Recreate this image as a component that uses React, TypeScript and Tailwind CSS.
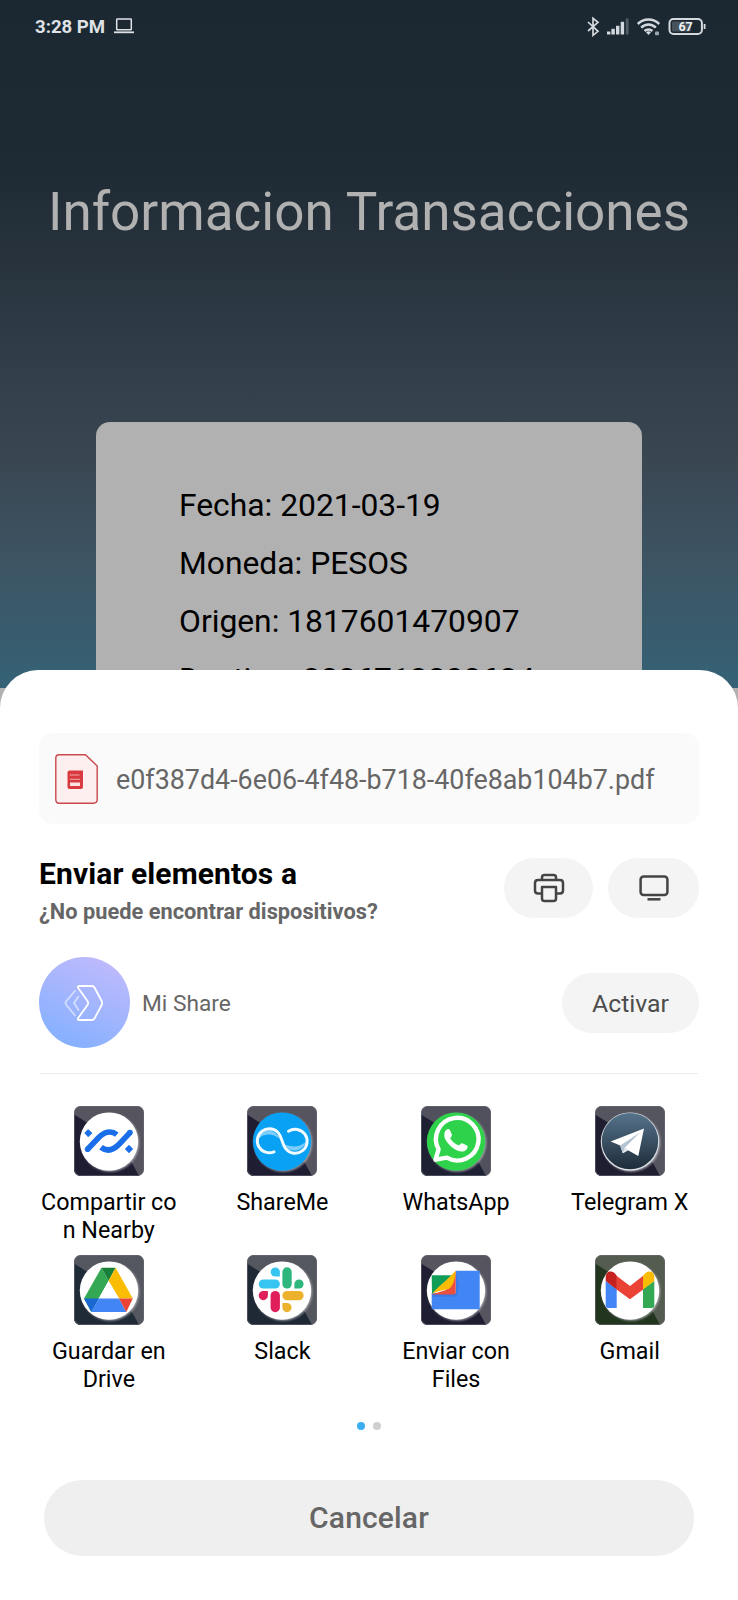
import type { ReactNode } from "react";

function StatusBar() {
  return (
    <header className="flex h-[53px] items-center justify-between pl-[35px] pr-8">
      <div className="flex items-center text-[#dfe3e7]">
        <span className="w-[79px] whitespace-nowrap text-[18.6px] font-bold leading-6">3:28 PM</span>
        <svg width="20" height="16" viewBox="0 0 20 16" fill="none" stroke="currentColor" strokeWidth="1.5" className="-mt-px">
          <rect x="2.7" y="1" width="14.6" height="10.8" rx="0.6" />
          <path d="M0 14.3H20" strokeWidth="1.8" />
        </svg>
      </div>
      <svg width="120" height="22" viewBox="0 0 120 22" fill="none" stroke="#d3d9dd" className="-mt-px text-[#d3d9dd]">
        <path d="M2 7L12 16.3L7 20.3V3.3L12 7.3L2 16" strokeWidth="1.7" />
        <g fill="currentColor" stroke="none">
          <rect x="21" y="16.5" width="3.4" height="3" />
          <rect x="25.4" y="13.8" width="3.4" height="5.7" />
          <rect x="30" y="10.8" width="3.4" height="8.7" />
          <rect x="34.7" y="6.8" width="3.4" height="12.7" />
          <rect x="39.8" y="3.5" width="2.8" height="16" opacity="0.3" />
        </g>
        <g strokeWidth="2.5">
          <path d="M51.8 9A15 15 0 0 1 73.2 9" />
          <path d="M55.2 12.6A10 10 0 0 1 69.8 12.6" />
          <path d="M58.6 16A5.5 5.5 0 0 1 66.4 16" />
        </g>
        <path d="M60 17.2A4 4 0 0 1 65 17.2L62.5 20Z" fill="currentColor" stroke="none" />
        <rect x="69" y="16.5" width="4" height="3.8" rx="1" fill="#9da5ab" stroke="none" />
        <rect x="83.5" y="4" width="32.4" height="15" rx="4" strokeWidth="2" />
        <rect x="86" y="6.4" width="19" height="10.2" rx="1.5" fill="#48525a" stroke="none" />
        <path d="M118.6 9V14" strokeWidth="1.8" />
        <text x="99.6" y="16" textAnchor="middle" fontSize="12.5" fontWeight="700" fill="#eef1f3" stroke="none">67</text>
      </svg>
    </header>
  );
}

type TileProps = { id: string; light: string; dark: string; disc: string; children: ReactNode };

function Tile({ id, light, dark, disc, children }: TileProps) {
  return (
    <svg width="70" height="70" viewBox="0 0 70 70" className="block shrink-0">
      <defs>
        <clipPath id={`clip-${id}`}>
          <rect width="70" height="70" rx="6.500" />
        </clipPath>
        <filter id={`glow-${id}`} x="-20%" y="-20%" width="140%" height="140%">
          <feGaussianBlur stdDeviation="1.200" />
        </filter>
      </defs>
      <g clipPath={`url(#clip-${id})`}>
        <rect width="70" height="70" fill={light} />
        <path d="M0 8.500L12 16L58 57L65 70H0Z" fill={dark} />
        <rect x="0.500" y="0.500" width="69" height="69" rx="6" fill="none" stroke="#6b6b75" strokeOpacity="0.600" />
      </g>
      <circle cx="36.200" cy="36.700" r="29" fill="#c9c9cf" opacity="0.700" filter={`url(#glow-${id})`} />
      <circle cx="35" cy="35.600" r="29.200" fill={disc} />
      {children}
    </svg>
  );
}

const Nearby = () => (
  <Tile id="nearby" light="#55545f" dark="#1f1d32" disc="#ffffff">
    <g fill="none" stroke="#1a6fe8" strokeWidth="5.600">
      <path d="M13.600 43.200L24.500 31.800C30 26 37 24 42.800 28.600" />
      <path d="M56 26.600L45.300 38C39.500 44 33 46 27 41.200" />
    </g>
    <g fill="#1a6fe8">
      <circle cx="13.600" cy="43.200" r="2.800" />
      <circle cx="56" cy="26.600" r="2.800" />
      <path d="M14.200 24L17.600 27.100L14.200 30.400L11.200 27Z" stroke="#1a6fe8" strokeWidth="1.200" strokeLinejoin="round" />
      <path d="M55 39.600L58.300 43L55 46.300L51.700 43Z" stroke="#1a6fe8" strokeWidth="1.200" strokeLinejoin="round" />
    </g>
  </Tile>
);

const ShareMe = () => (
  <Tile id="shareme" light="#55545f" dark="#1f1d32" disc="#08a1f4">
    <path d="M11 33C13 23 26 20 33 33C27 28 18 26 11 33Z" fill="#7dcdfb" />
    <path d="M58.500 36C56 46 43 48 37 38C43 41 52 42 58.500 36Z" fill="#7dcdfb" />
    <path
      d="M27 45.800A12 12 0 1 1 30.500 26C35 30 35 38.500 39 43A12 12 0 1 0 41.500 25.200"
      fill="none"
      stroke="#f2fbff"
      strokeWidth="3"
      strokeLinecap="round"
    />
  </Tile>
);

const WhatsApp = () => (
  <Tile id="whatsapp" light="#50515d" dark="#1e2033" disc="#2fd34b">
    <path
      d="M15.200 54L18.300 43.700A21.300 21.300 0 1 1 26.500 52Z"
      transform="translate(-.7 -.3)"
      fill="none"
      stroke="#fff"
      strokeWidth="4.400"
      strokeLinejoin="round"
    />
    <path
      d="M25.400 23.800C27 22.600 28.400 22.900 29.100 24.600L30.900 28.600C31.200 29.500 30.200 31 29.200 32.200C31.500 36 34 38 38 39.500C39.200 38.200 40.200 37 41.200 37.300L46 39.600C47.300 40.300 46.500 42.500 45 44C41.500 46.900 36.500 45.300 32 42C27.500 38.500 24 34 23.400 30.500C23 27.500 23.800 25 25.400 23.800Z"
      fill="#fff"
    />
  </Tile>
);

const Telegram = () => (
  <Tile id="telegram" light="#55555f" dark="#1f1d30" disc="#dfe3e8">
    <defs>
      <linearGradient id="tg-sky" x1="0" y1="0" x2="0" y2="1">
        <stop offset="0" stopColor="#56748c" />
        <stop offset="1" stopColor="#1e2c3a" />
      </linearGradient>
    </defs>
    <circle cx="35" cy="35.100" r="28.200" fill="url(#tg-sky)" />
    <path d="M15.700 35.600L49 22.400L43.300 50L33 44.300L27.800 47.300L25.200 39.600Z" fill="#fff" />
    <path d="M25.200 39.600L45 26.500L30 41.500L27.800 47.300Z" fill="#b6c3d3" />
    <path d="M30 41.500L33 44.300L27.800 47.300Z" fill="#dce3ec" />
  </Tile>
);

const Drive = () => (
  <Tile id="drive" light="#54575f" dark="#202b38" disc="#ffffff">
    <path d="M27.500 12.700L34.600 25.800L17.300 57L10 43.600Z" fill="#34a853" />
    <path d="M27.500 12.700H41.600L34.600 25.800Z" fill="#188038" />
    <path d="M41.600 12.700L58.800 43.600H45L34.600 25.800Z" fill="#fbbc04" />
    <path d="M34.600 26L45 43.600H24.700Z" fill="#fff" />
    <path d="M10 43.600H24.700L17.300 57Z" fill="#1967d2" />
    <path d="M24.700 43.600H45L52.300 57H17.300Z" fill="#4285f4" />
    <path d="M45 43.600H58.800L52.300 57Z" fill="#ea4335" />
  </Tile>
);

const Slack = () => (
  <Tile id="slack" light="#55575f" dark="#1f2935" disc="#ffffff">
    <g fill="#36c5f0">
      <rect x="11.700" y="24.400" width="21.200" height="9.200" rx="4.600" />
      <path d="M32.900 21.600H28.300A4.600 4.600 0 1 1 32.900 17Z" />
    </g>
    <g fill="#2eb67d">
      <rect x="35.400" y="12.300" width="9.300" height="21.300" rx="4.600" />
      <path d="M47.400 33.600V29A4.600 4.600 0 1 1 52 33.600Z" />
    </g>
    <g fill="#e01e5a">
      <rect x="23.600" y="36" width="9.300" height="21.200" rx="4.600" />
      <path d="M20.900 36V40.600A4.600 4.600 0 1 1 16.300 36Z" />
    </g>
    <g fill="#ecb22e">
      <rect x="35.400" y="36" width="21.200" height="9.300" rx="4.600" />
      <path d="M35.400 48H40A4.600 4.600 0 1 1 35.400 52.600Z" />
    </g>
  </Tile>
);

const Files = () => (
  <Tile id="files" light="#55545f" dark="#1f1d32" disc="#ffffff">
    <path d="M34.700 15.700H58.700V54.300H10.700V38H34.700Z" fill="#4285f4" />
    <path d="M34.700 17L38 30L36 41.500L12 42L10.700 39H34.700Z" fill="#2a5fc4" opacity="0.300" />
    <path d="M10.700 20.300H31L11 39Z" fill="#109d58" />
    <path d="M34.700 15.700V37.500Q34.700 39.500 32.700 39.500H10.700L25 35Z" fill="#ea4f3d" />
    <path d="M34.700 15.700C34 24 32 33 26 34.500C20 35.300 14 37 10.700 39.300C17 32 27 24 34.700 15.700Z" fill="#fbbc04" />
  </Tile>
);

const Gmail = () => (
  <Tile id="gmail" light="#545c50" dark="#22351f" disc="#ffffff">
    <path d="M10.700 26L21.700 34V53H13Q10.700 53 10.700 50.700Z" fill="#4285f4" />
    <path d="M48 34L59.300 26V50.700Q59.300 53 57 53H48Z" fill="#34a853" />
    <path d="M21.200 20.500L35 31L48.500 20.500V34.200L35 44.300L21.200 34.200Z" fill="#ea4335" />
    <path d="M10.700 26V22C10.700 16.500 16 15 20 18.500L21.700 20.800V34.400Z" fill="#c5221f" />
    <path d="M59.300 26V22C59.300 16.500 54 15 50 18.500L48 20.800V34.400Z" fill="#fbbc04" />
  </Tile>
);

const apps: { name: string; lines: string[]; icon: ReactNode }[] = [
  { name: "nearby", lines: ["Compartir co", "n Nearby"], icon: <Nearby /> },
  { name: "shareme", lines: ["ShareMe"], icon: <ShareMe /> },
  { name: "whatsapp", lines: ["WhatsApp"], icon: <WhatsApp /> },
  { name: "telegram", lines: ["Telegram X"], icon: <Telegram /> },
  { name: "drive", lines: ["Guardar en", "Drive"], icon: <Drive /> },
  { name: "slack", lines: ["Slack"], icon: <Slack /> },
  { name: "files", lines: ["Enviar con", "Files"], icon: <Files /> },
  { name: "gmail", lines: ["Gmail"], icon: <Gmail /> },
];

function ShareSheet() {
  return (
    <section className="relative -mt-[18px] flex h-[930px] flex-col rounded-t-[38px] bg-white pt-[63px]">
      <div className="mx-[39px] flex h-[91px] items-center rounded-[14px] bg-[#fafafa] pl-4">
        <svg width="43" height="50" viewBox="0 0 43 50" className="shrink-0">
          <path
            d="M4 .8H30.500L42.200 12V45.500Q42.200 49.200 38.500 49.200H4Q.8 49.200 .8 45.500V4Q.8 .8 4 .8Z"
            fill="#fdeff0"
            stroke="#c9484c"
            strokeWidth="1.400"
          />
          <path d="M14.500 16.500H28V33Q28 35 26 35H14.500Q12.500 35 12.500 33V18.500Q12.500 16.500 14.500 16.500Z" fill="#d83a40" />
          <path d="M14.800 21H24.500M14.800 25.300H25" stroke="#f3a9ab" strokeWidth="1" />
          <rect x="15" y="28.500" width="10" height="3.500" fill="#fbe3e4" />
        </svg>
        <span className="ml-[18px] mt-[3px] whitespace-nowrap text-[26.850px] leading-8 text-[#666]">
          e0f387d4-6e06-4f48-b718-40fe8ab104b7.pdf
        </span>
      </div>

      <div className="mx-[39px] mt-[34px] flex h-[60px] justify-between">
        <div className="whitespace-nowrap">
          <h2 className="text-[30px] font-bold leading-8 tracking-[0.1px] text-black">Enviar elementos a</h2>
          <p className="mt-[10px] text-[21.800px] font-bold leading-6 text-[#666]">¿No puede encontrar dispositivos?</p>
        </div>
        <div className="flex gap-[15px]">
          <button aria-label="Imprimir" className="flex h-[60px] w-[89px] items-center justify-center rounded-full bg-[#f4f4f4]">
            <svg width="32" height="30" viewBox="0 0 32 30" fill="none" stroke="#444" strokeWidth="2.500" strokeLinejoin="round">
              <path d="M9 7V4.500Q9 2 11.500 2H20.500Q23 2 23 4.500V7" />
              <path d="M9 20.500H5Q2 20.500 2 17.500V10Q2 7 5 7H27Q30 7 30 10V17.500Q30 20.500 27 20.500H23" />
              <path d="M9 14H23V25.500Q23 28 20.500 28H11.500Q9 28 9 25.500Z" />
            </svg>
          </button>
          <button aria-label="Pantalla" className="flex h-[60px] w-[91px] items-center justify-center rounded-full bg-[#f4f4f4]">
            <svg width="30" height="26" viewBox="0 0 30 26" fill="none" stroke="#444" strokeWidth="2.500">
              <rect x="1.600" y="1.600" width="26.800" height="18.400" rx="3" />
              <path d="M8.500 24.300H21.500" strokeWidth="2.500" />
            </svg>
          </button>
        </div>
      </div>

      <div className="mx-[39px] mt-[39px] flex h-[91px] items-center">
        <div className="flex size-[91px] items-center justify-center rounded-full bg-linear-[25deg] from-[#7dafff] to-[#c6bbfc]">
          <svg width="40" height="36" viewBox="0 0 40 36" fill="none" stroke="#fff" strokeLinejoin="round" strokeLinecap="round" strokeWidth="1.800" className="-ml-0.5">
            <path d="M15.500 1H28Q29.500 1 30.500 2.500L37.700 16Q38.500 18 37.700 20L30.500 33.500Q29.500 35 28 35H15.500Q13 35 14.200 33L23.500 20Q24.800 18 23.500 16L14.200 3Q13 1 15.500 1Z" />
            <path d="M11 6L2 16.500Q1 18 2 19.500L11 30.500M14.500 11.500L10 18L14.500 25" opacity="0.550" />
          </svg>
        </div>
        <span className="ml-[12px] mt-0.5 flex-1 text-[22.700px] leading-7 text-[#666]">Mi Share</span>
        <button className="h-[60px] w-[137px] rounded-full bg-[#f4f4f4] pt-0.5 text-[24.800px] leading-7 text-[#4d4d4d]">Activar</button>
      </div>

      <hr className="mx-[40px] mt-[25px] border-t border-[#ececec]" />

      <div className="ml-[22px] mt-[32px] grid w-[694.500px] grid-cols-4">
        {apps.map((app) => (
          <div key={app.name} className="flex h-[149px] flex-col items-center">
            {app.icon}
            <p className="mt-[13px] whitespace-nowrap text-center text-[23.300px] leading-[27.500px] text-black">
              {app.lines.map((line) => (
                <span key={line} className="block">
                  {line}
                </span>
              ))}
            </p>
          </div>
        ))}
      </div>

      <div className="mt-[18px] flex justify-center gap-2">
        <span className="size-2 rounded-full bg-[#3aaef0]" />
        <span className="size-2 rounded-full bg-[#cfcfcf]" />
      </div>

      <button className="mx-[44px] mt-[50px] h-[76px] rounded-full bg-[#efefef] text-[30px] font-medium leading-8 tracking-[0.15px] text-[#666]">
        Cancelar
      </button>
    </section>
  );
}

export default function App() {
  return (
    <div className="h-[1600px] w-[738px] overflow-hidden bg-[#b1b1b1] font-['Roboto',sans-serif]">
      <div className="flex h-[688px] flex-col bg-[linear-gradient(#1b2731_0px,#1f2b34_170px,#27323d_255px,#323e49_370px,#3a4753_465px,#3d5463_560px,#375e70_650px,#356276_688px)]">
        <StatusBar />
        <h1 className="mt-[127px] whitespace-nowrap text-center text-[53px] leading-16 text-[#b1b1b1]">
          Informacion Transacciones
        </h1>
        <div className="mx-auto mt-[178px] h-[266px] w-[546px] overflow-hidden rounded-t-[14px] bg-[#b1b1b1] pl-[83px] pt-[54px] text-[31.800px] leading-[58px] text-black">
          <p>Fecha: 2021-03-19</p>
          <p>Moneda: PESOS</p>
          <p>Origen: 1817601470907</p>
          <p>Destino: 2236713203624</p>
        </div>
      </div>
      <ShareSheet />
    </div>
  );
}
